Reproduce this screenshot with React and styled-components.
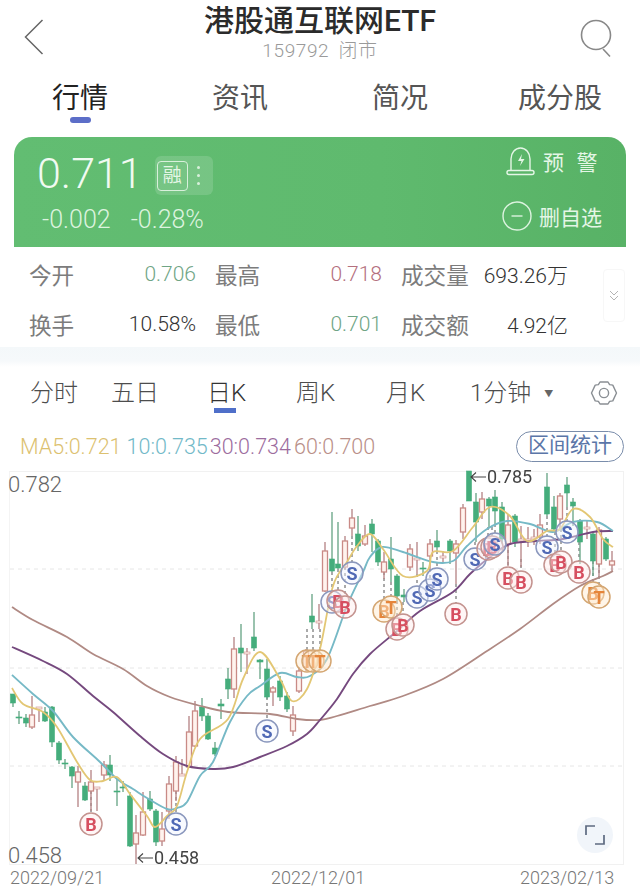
import React from 'react';
import styled, { createGlobalStyle } from 'styled-components';

const GlobalStyle = createGlobalStyle`
  html, body { margin: 0; padding: 0; background: #fff; }
  body {
    width: 640px;
    height: 889px;
    overflow: hidden;
    font-family: Roboto, "Noto Sans CJK SC", sans-serif;
  }
  * { box-sizing: border-box; }
`;

const Page = styled.div`
  width: 640px;
  height: 889px;
  display: flex;
  flex-direction: column;
  color: #333;
`;

/* header */
const Header = styled.header`
  height: 68px;
  display: grid;
  grid-template-columns: 80px 1fr 80px;
  align-items: center;
`;
const BackBtn = styled.div`
  padding: 6px 0 0 23px;
  display: flex;
`;
const SearchBtn = styled.div`
  padding: 10px 0 0 19px;
  display: flex;
`;
const TitleBox = styled.div`
  text-align: center;
  margin-top: -2px;
`;
const Title = styled.div`
  font-size: 30px;
  line-height: 36px;
  font-weight: 500;
  color: #2b2b2b;
  white-space: nowrap;
`;
const SubTitle = styled.div`
  font-size: 19px;
  line-height: 24px;
  margin-top: 0;
  font-weight: 300;
  letter-spacing: 0.6px;
  color: #9a9a9a;
  word-spacing: 4px;
`;

const Tabs = styled.nav`
  height: 69px;
  display: grid;
  grid-template-columns: 160px 160px 146px auto;
  padding-left: 52px;
`;
const Tab = styled.div`
  position: relative;
  font-size: 28px;
  line-height: 38px;
  padding-top: 12px;
  color: ${(p) => (p.$active ? '#222' : '#555')};
  &::after {
    content: '';
    display: ${(p) => (p.$active ? 'block' : 'none')};
    position: absolute;
    left: 18px;
    top: 49px;
    width: 21px;
    height: 6px;
    border-radius: 3px;
    background: #5c6ec8;
  }
`;

/* green quote card */
const QuoteCard = styled.section`
  margin: 0 14px;
  height: 111px;
  border-radius: 18px 18px 0 0;
  background: linear-gradient(90deg, #62bd72 0%, #5fba6e 60%, #58b266 100%);
  display: flex;
  justify-content: space-between;
  color: #e4f6e6;
`;
const QuoteLeft = styled.div`
  padding: 13px 0 0 23px;
`;
const PriceRow = styled.div`
  display: flex;
  align-items: center;
  gap: 12px;
`;
const Price = styled.div`
  font-size: 43px;
  line-height: 46px;
  font-weight: 300;
  color: #f1faf2;
`;
const MarginBadge = styled.div`
  width: 58px;
  height: 39px;
  border-radius: 6px;
  background: rgba(255, 255, 255, 0.14);
  display: flex;
  align-items: center;
  padding-left: 2px;
  gap: 9px;
  margin-top: 6px;
`;
const MarginMark = styled.div`
  width: 31px;
  height: 30px;
  border: 1.5px solid #d8f0db;
  border-radius: 4px;
  font-size: 19px;
  line-height: 27px;
  text-align: center;
`;
const Dots = styled.div`
  display: flex;
  flex-direction: column;
  gap: 5px;
  i {
    width: 3px;
    height: 3px;
    border-radius: 50%;
    background: #d8f0db;
  }
`;
const ChangeRow = styled.div`
  display: flex;
  gap: 20px;
  margin: 9px 0 0 5px;
  font-size: 25px;
  line-height: 30px;
  font-weight: 300;
  color: #dcf3df;
`;
const QuoteRight = styled.div`
  width: 124px;
  padding-top: 9px;
  display: flex;
  flex-direction: column;
  gap: 25px;
`;
const QuoteAction = styled.div`
  display: flex;
  align-items: center;
  height: 30px;
  font-size: 21px;
  white-space: pre;
  word-spacing: ${(p) => (p.$wide ? '1px' : '0')};
  gap: 7px;
  margin-left: ${(p) => (p.$wide ? '3px' : '0')};
`;

/* stats */
const Stats = styled.section`
  position: relative;
  height: 100px;
  padding: 2px 0 0 29px;
  display: grid;
  grid-template-columns: repeat(3, 167px);
  grid-auto-rows: 50px;
  column-gap: 19px;
  background: #fff;
`;
const Stat = styled.div`
  display: flex;
  justify-content: space-between;
  align-items: center;
  font-size: 22.6px;
`;
const StatLabel = styled.span`
  color: #7c7c7c;
`;
const StatValue = styled.span`
  font-size: 21px;
  font-weight: 300;
  color: ${(p) => p.$color || '#333'};
`;
const Expand = styled.div`
  position: absolute;
  left: 603px;
  top: 22px;
  width: 22px;
  height: 53px;
  border: 1px solid #f7f7f7;
  border-radius: 4px;
  display: flex;
  align-items: center;
  justify-content: center;
`;
const Band = styled.div`
  height: 20px;
  background: linear-gradient(180deg, #f4f8fa 0%, #f6f9fb 70%, #fff 100%);
`;

/* period tabs */
const Periods = styled.nav`
  position: relative;
  height: 52px;
  padding-left: 30px;
  display: grid;
  grid-template-columns: 81px 96px 89px 90px 84px 120px auto;
  align-items: center;
`;
const Period = styled.div`
  position: relative;
  font-size: 24px;
  font-weight: 300;
  line-height: 30px;
  color: ${(p) => (p.$active ? '#333' : '#4d4d4d')};
  white-space: nowrap;
  &::after {
    content: '';
    display: ${(p) => (p.$active ? 'block' : 'none')};
    position: absolute;
    left: 7px;
    top: 30px;
    width: 22px;
    height: 5px;
    background: #4f6fc9;
  }
`;
const Caret = styled.span`
  font-size: 9px;
  color: #666;
  margin-left: 13px;
  vertical-align: 4px;
`;
const Gear = styled.div`
  display: flex;
`;

/* MA row */
const MaRow = styled.div`
  height: 52px;
  padding: 3px 16px 0 20px;
  display: flex;
  align-items: center;
`;
const Ma = styled.span`
  font-size: 21.5px;
  font-weight: 300;
  color: ${(p) => p.$color};
  margin-right: ${(p) => p.$gap || 2}px;
`;
const RangeBtn = styled.div`
  margin-left: auto;
  width: 108px;
  height: 31px;
  border: 1.5px solid #7a8dab;
  border-radius: 16px;
  color: #5b76a8;
  font-size: 21px;
  line-height: 27px;
  text-align: center;
`;

/* chart */
const ChartFrame = styled.div`
  position: relative;
  margin-left: 9px;
  width: 615px;
  height: 395px;
  border: 1px solid #f1f1f1;
  border-left-color: #f4f4f4;
`;
const ChartSvg = styled.svg`
  position: absolute;
  left: -10px;
  top: -13px;
  display: block;
  filter: blur(0.35px);
`;
const AxisLabel = styled.div`
  position: absolute;
  left: -2px;
  ${(p) => (p.$bottom ? 'bottom: -5px;' : 'top: 0;')}
  font-size: 22px;
  font-weight: 300;
  line-height: 26px;
  color: #666;
`;
const FullscreenBtn = styled.div`
  position: absolute;
  left: 567px;
  top: 345px;
  width: 36px;
  height: 36px;
  border-radius: 50%;
  background: #f1f5fa;
  display: flex;
  align-items: center;
  justify-content: center;
`;
const Dates = styled.div`
  display: grid;
  grid-template-columns: 261px 249px auto;
  padding-left: 10px;
  font-size: 18px;
  font-weight: 300;
  line-height: 22px;
  margin-top: 2px;
  color: #777;
`;

// [x, wickTop, wickBottom, bodyTop, bodyBottom, colour]
const CANDLES = [
  [13, 695, 708, 695, 704, 'g'], [19, 712, 725, 718, 719, 'g'], [26, 715, 728, 719, 724, 'g'],
  [32, 697, 730, 716, 728, 'r'], [39, 708, 723, 708, 710, 'r'], [45, 708, 723, 713, 722, 'g'],
  [52, 707, 748, 708, 743, 'g'], [59, 742, 765, 744, 761, 'g'], [65, 760, 770, 764, 765, 'g'],
  [72, 767, 789, 768, 777, 'g'], [78, 767, 808, 773, 783, 'r'], [85, 783, 802, 787, 801, 'g'],
  [91, 771, 812, 783, 792, 'r'], [97, 788, 812, 788, 790, 'r'], [104, 762, 782, 766, 776, 'r'],
  [110, 756, 782, 766, 776, 'g'], [117, 780, 807, 792, 793, 'g'], [123, 782, 793, 788, 789, 'g'],
  [130, 793, 848, 797, 847, 'g'], [136, 816, 865, 834, 845, 'r'], [143, 793, 837, 813, 836, 'r'],
  [150, 792, 812, 800, 810, 'g'], [156, 810, 847, 812, 843, 'g'], [162, 813, 847, 830, 842, 'r'],
  [169, 777, 820, 785, 812, 'r'], [176, 757, 802, 763, 792, 'r'], [182, 760, 777, 775, 777, 'r'],
  [189, 717, 769, 733, 768, 'r'], [195, 702, 748, 712, 747, 'r'], [202, 699, 722, 708, 717, 'g'],
  [208, 714, 741, 717, 740, 'g'], [215, 743, 757, 749, 755, 'g'], [221, 700, 720, 705, 707, 'g'],
  [228, 669, 700, 680, 690, 'g'], [234, 638, 699, 650, 690, 'r'], [241, 625, 673, 649, 654, 'g'],
  [247, 649, 675, 653, 655, 'r'], [254, 613, 652, 638, 649, 'g'], [260, 660, 680, 661, 663, 'g'],
  [267, 660, 700, 670, 698, 'g'], [273, 687, 707, 689, 693, 'r'], [280, 677, 702, 682, 698, 'g'],
  [287, 693, 713, 697, 710, 'g'], [293, 707, 737, 716, 732, 'r'], [299, 668, 694, 672, 692, 'r'],
  [306, 650, 672, 652, 668, 'r'], [312, 595, 630, 617, 623, 'g'], [319, 605, 630, 622, 624, 'r'],
  [325, 543, 593, 552, 592, 'r'], [332, 513, 573, 560, 572, 'g'], [338, 523, 570, 565, 569, 'g'],
  [345, 537, 570, 542, 568, 'r'], [352, 510, 537, 519, 529, 'r'], [358, 517, 552, 535, 547, 'g'],
  [365, 526, 547, 537, 545, 'r'], [372, 520, 553, 525, 535, 'g'], [378, 540, 567, 542, 563, 'g'],
  [384, 553, 580, 563, 573, 'r'], [391, 538, 583, 560, 570, 'g'], [397, 575, 602, 577, 597, 'g'],
  [404, 590, 603, 596, 598, 'g'], [410, 545, 572, 550, 568, 'r'], [417, 543, 575, 559, 561, 'r'],
  [423, 563, 577, 569, 570, 'g'], [430, 540, 570, 545, 557, 'r'], [437, 531, 552, 542, 548, 'g'],
  [443, 552, 563, 557, 559, 'r'], [450, 540, 565, 542, 552, 'g'], [456, 541, 585, 545, 554, 'r'],
  [463, 505, 540, 509, 533, 'r'], [469, 472, 502, 472, 502, 'g'], [476, 494, 543, 503, 523, 'g'],
  [482, 493, 520, 500, 513, 'r'], [489, 498, 528, 500, 507, 'g'], [495, 491, 525, 498, 512, 'g'],
  [502, 503, 545, 508, 540, 'g'], [508, 515, 567, 526, 545, 'r'], [515, 515, 548, 517, 543, 'g'],
  [521, 527, 568, 540, 542, 'r'], [528, 528, 548, 540, 542, 'r'], [534, 530, 546, 538, 540, 'r'],
  [540, 515, 545, 526, 538, 'r'], [547, 474, 517, 488, 515, 'g'], [554, 497, 533, 508, 530, 'g'],
  [560, 494, 530, 497, 520, 'r'], [567, 478, 508, 486, 494, 'g'], [573, 499, 527, 503, 507, 'g'],
  [580, 520, 565, 522, 543, 'g'], [587, 522, 540, 528, 530, 'r'], [593, 533, 577, 535, 562, 'g'],
  [599, 528, 578, 531, 565, 'r'], [606, 538, 562, 540, 560, 'g'], [612, 552, 573, 562, 566, 'r'],
];

const MA60 = [[12, 608], [33, 621], [67, 638], [93, 655], [123, 670], [147, 687], [170, 698], [197, 706], [228, 713], [270, 715], [297, 720], [320, 721], [337, 717], [370, 707], [403, 697], [443, 680], [487, 652], [520, 630], [553, 605], [580, 587], [603, 577], [613, 572]];
const MA30 = [[12, 648], [43, 662], [67, 675], [93, 697], [113, 713], [140, 737], [163, 755], [187, 767], [213, 770], [233, 768], [260, 758], [287, 747], [307, 735], [320, 721], [337, 700], [353, 675], [370, 655], [397, 632], [420, 612], [453, 593], [470, 575], [490, 558], [510, 545], [537, 542], [563, 540], [593, 533], [613, 532]];
const MA10 = [[12, 676], [33, 695], [53, 712], [73, 738], [100, 763], [117, 780], [133, 790], [147, 799], [167, 810], [177, 809], [187, 803], [200, 777], [213, 763], [230, 723], [247, 697], [260, 687], [280, 674], [297, 678], [310, 677], [327, 660], [347, 607], [363, 573], [370, 558], [382, 548], [403, 553], [433, 563], [453, 562], [467, 547], [487, 530], [507, 522], [530, 525], [553, 533], [573, 523], [597, 523], [613, 532]];
const MA5 = [[12, 689], [23, 705], [43, 713], [57, 728], [77, 763], [90, 781], [103, 782], [117, 778], [130, 795], [147, 817], [155, 828], [167, 817], [177, 807], [187, 773], [200, 740], [228, 720], [243, 680], [260, 653], [280, 680], [292, 702], [307, 690], [320, 650], [333, 587], [347, 563], [357, 547], [370, 535], [383, 550], [403, 577], [427, 572], [433, 553], [453, 552], [473, 528], [490, 508], [510, 517], [527, 542], [547, 532], [560, 530], [573, 510], [590, 518], [603, 540], [613, 548]];

// [x, y, letter, kind, dashStartY]
const BADGES = [
  [91, 825, 'B', 'b', 792], [176, 825, 'S', 's', 792], [267, 732, 'S', 's', 698],
  [307, 662, 'T', 'o', 630], [313, 662, 'T', 'o', 630], [320, 662, 'T', 'o', 630],
  [332, 603, 'S', 's', 573], [338, 602, 'B', 'b', 570], [345, 608, 'B', 'b', 568], [352, 574, 'S', 's', 537],
  [384, 612, 'B', 'o', 573], [391, 608, 'T', 'o', 583], [397, 630, 'B', 'b', 602], [403, 626, 'B', 'b', 603],
  [417, 598, 'S', 's', 575], [430, 591, 'S', 's', 570], [437, 580, 'S', 's', 552],
  [456, 615, 'B', 'b', 585], [475, 560, 'S', 's', 543], [488, 550, 'B', 'b', 528], [492, 548, 'B', 'b', 528], [495, 545, 'S', 's', 525],
  [508, 579, 'B', 'b', 545], [521, 583, 'B', 'b', 560], [547, 548, 'S', 's', 517],
  [555, 566, 'B', 'b', 533], [561, 563, 'B', 'b', 530], [567, 533, 'S', 's', 508], [579, 573, 'B', 'b', 543],
  [593, 594, 'B', 'o', 562], [599, 598, 'T', 'o', 565],
];

const BADGE_COLORS = {
  b: { stroke: '#c4938f', fill: 'rgba(255,236,234,0.45)', text: '#d64f60' },
  s: { stroke: '#8a97bd', fill: 'rgba(240,244,255,0.45)', text: '#5069b5' },
  o: { stroke: '#d4a672', fill: 'rgba(255,232,205,0.45)', text: '#e5853a' },
};

// catmull-rom through the sampled points, keeps the averages round
const smooth = (pts) => {
  let d = `M${pts[0][0]} ${pts[0][1]}`;
  for (let i = 0; i < pts.length - 1; i++) {
    const p0 = pts[i - 1] || pts[i];
    const p1 = pts[i];
    const p2 = pts[i + 1];
    const p3 = pts[i + 2] || p2;
    const c1x = p1[0] + (p2[0] - p0[0]) / 6;
    const c1y = p1[1] + (p2[1] - p0[1]) / 6;
    const c2x = p2[0] - (p3[0] - p1[0]) / 6;
    const c2y = p2[1] - (p3[1] - p1[1]) / 6;
    d += ` C${c1x.toFixed(1)} ${c1y.toFixed(1)} ${c2x.toFixed(1)} ${c2y.toFixed(1)} ${p2[0]} ${p2[1]}`;
  }
  return d;
};

const Candle = ({ c }) => {
  const [x, top, bottom, bodyTop, bodyBottom, kind] = c;
  const red = kind === 'r';
  const thin = bodyBottom - bodyTop < 4;
  return (
    <g>
      <line x1={x} x2={x} y1={top} y2={bottom} stroke={red ? '#b98a8c' : '#6fa98c'} strokeWidth="1.4" />
      <rect
        x={x - (thin ? 3 : 2.5)}
        y={bodyTop}
        width={thin ? 6 : 5}
        height={bodyBottom - bodyTop}
        fill={red ? '#fff3ee' : '#45ad7c'}
        stroke={red ? '#c98a86' : '#45ad7c'}
        strokeWidth={red && !thin ? 1.3 : 0.6}
      />
    </g>
  );
};

const Badge = ({ b }) => {
  const [x, y, letter, kind] = b;
  const col = BADGE_COLORS[kind];
  return (
    <g>
      <circle cx={x} cy={y} r="11" fill={col.fill} stroke={col.stroke} strokeWidth="1.5" />
      <text
        x={x}
        y={y + 6.5}
        textAnchor="middle"
        fontFamily="Roboto, sans-serif"
        fontWeight="700"
        fontSize="18"
        fill={col.text}
      >
        {letter}
      </text>
    </g>
  );
};

const PriceNote = ({ x, y, children }) => (
  <g>
    <path d={`M${x + 16} ${y}H${x + 1}M${x + 6} ${y - 4.5}L${x + 1} ${y}L${x + 6} ${y + 4.5}`} fill="none" stroke="#444" strokeWidth="1.1" />
    <text x={x + 17} y={y + 6} fontFamily="Roboto, sans-serif" fontSize="18" fill="#444">
      {children}
    </text>
  </g>
);

const Chart = () => (
  <ChartSvg width="640" height="410" viewBox="0 460 640 410">
    {[570, 669, 767].map((y) => (
      <line key={y} x1="10" x2="622" y1={y} y2={y} stroke="#e6e6e6" strokeWidth="1" strokeDasharray="4 4" />
    ))}
    {BADGES.map((b, i) => (
      <line key={i} x1={b[0]} x2={b[0]} y1={b[4]} y2={b[1] - 10} stroke="#555" strokeWidth="1" strokeDasharray="3 3" />
    ))}
    {CANDLES.map((c) => (
      <Candle key={c[0]} c={c} />
    ))}
    <path d={smooth(MA60)} fill="none" stroke="#b08a84" strokeWidth="1.8" />
    <path d={smooth(MA30)} fill="none" stroke="#75497e" strokeWidth="1.9" />
    <path d={smooth(MA10)} fill="none" stroke="#76b9c6" strokeWidth="1.9" />
    <path d={smooth(MA5)} fill="none" stroke="#e3c774" strokeWidth="1.8" />
    {BADGES.map((b, i) => (
      <Badge key={i} b={b} />
    ))}
    <PriceNote x={470} y={478}>0.785</PriceNote>
    <PriceNote x={137} y={859}>0.458</PriceNote>
  </ChartSvg>
);

const BackIcon = () => (
  <svg width="22" height="38" viewBox="0 0 22 38" fill="none" stroke="#666" strokeWidth="1.5">
    <path d="M19.5 2L2.5 19l17 17" />
  </svg>
);

const SearchIcon = () => (
  <svg width="36" height="42" viewBox="0 0 36 42" fill="none" stroke="#888" strokeWidth="1.6">
    <circle cx="17" cy="17" r="14.5" />
    <path d="M24 31l7 7.5" />
  </svg>
);

const BellIcon = () => (
  <svg width="31" height="30" viewBox="0 0 31 30" fill="none" stroke="#e4f6e6" strokeWidth="1.4">
    <path d="M6 25V13C6 7 10 2 15.5 2S25 7 25 13v12" />
    <rect x="2" y="24.5" width="27" height="4" rx="2" />
    <path d="M17 8l-4 7h3.5l-1.5 5 4.5-7H16z" fill="#e4f6e6" stroke="none" />
  </svg>
);

const MinusIcon = () => (
  <svg width="30" height="30" viewBox="0 0 30 30" fill="none" stroke="#dcf3df" strokeWidth="1.4">
    <circle cx="15" cy="15" r="14" />
    <path d="M9.5 15h11" />
  </svg>
);

const GearIcon = () => (
  <svg width="28" height="28" viewBox="0 0 28 28" fill="none" stroke="#8a8f94" strokeWidth="1.4">
    <path d="M10 3h8l1.6 2.6 3.2.5L26.5 14l-3.7 7.9-3.2.5L18 25h-8l-1.6-2.6-3.2-.5L1.5 14l3.7-7.9 3.2-.5z" strokeLinejoin="round" />
    <circle cx="14" cy="14" r="4.6" />
  </svg>
);

const App = () => (
  <Page>
    <GlobalStyle />
    <Header>
      <BackBtn>
        <BackIcon />
      </BackBtn>
      <TitleBox>
        <Title>港股通互联网ETF</Title>
        <SubTitle>159792 闭市</SubTitle>
      </TitleBox>
      <SearchBtn>
        <SearchIcon />
      </SearchBtn>
    </Header>
    <Tabs>
      <Tab $active>行情</Tab>
      <Tab>资讯</Tab>
      <Tab>简况</Tab>
      <Tab>成分股</Tab>
    </Tabs>
    <QuoteCard>
      <QuoteLeft>
        <PriceRow>
          <Price>0.711</Price>
          <MarginBadge>
            <MarginMark>融</MarginMark>
            <Dots>
              <i />
              <i />
              <i />
            </Dots>
          </MarginBadge>
        </PriceRow>
        <ChangeRow>
          <span>-0.002</span>
          <span>-0.28%</span>
        </ChangeRow>
      </QuoteLeft>
      <QuoteRight>
        <QuoteAction $wide>
          <BellIcon />
          预  警
        </QuoteAction>
        <QuoteAction>
          <MinusIcon />
          删自选
        </QuoteAction>
      </QuoteRight>
    </QuoteCard>
    <Stats>
      <Stat>
        <StatLabel>今开</StatLabel>
        <StatValue $color="#6fa585">0.706</StatValue>
      </Stat>
      <Stat>
        <StatLabel>最高</StatLabel>
        <StatValue $color="#b4707e">0.718</StatValue>
      </Stat>
      <Stat>
        <StatLabel>成交量</StatLabel>
        <StatValue>693.26万</StatValue>
      </Stat>
      <Stat>
        <StatLabel>换手</StatLabel>
        <StatValue>10.58%</StatValue>
      </Stat>
      <Stat>
        <StatLabel>最低</StatLabel>
        <StatValue $color="#6fa585">0.701</StatValue>
      </Stat>
      <Stat>
        <StatLabel>成交额</StatLabel>
        <StatValue>4.92亿</StatValue>
      </Stat>
      <Expand>
        <svg width="12" height="14" viewBox="0 0 12 14" fill="none" stroke="#b4b4b4" strokeWidth="1">
          <path d="M2 2l4 4 4-4M2 7l4 4 4-4" />
        </svg>
      </Expand>
    </Stats>
    <Band />
    <Periods>
      <Period>分时</Period>
      <Period>五日</Period>
      <Period $active>日K</Period>
      <Period>周K</Period>
      <Period>月K</Period>
      <Period>
        1分钟<Caret>▼</Caret>
      </Period>
      <Gear>
        <GearIcon />
      </Gear>
    </Periods>
    <MaRow>
      <Ma $color="#dcc170" $gap={5}>MA5:0.721</Ma>
      <Ma $color="#72b9c8">10:0.735</Ma>
      <Ma $color="#9c6c9e" $gap={3}>30:0.734</Ma>
      <Ma $color="#b98f88">60:0.700</Ma>
      <RangeBtn>区间统计</RangeBtn>
    </MaRow>
    <ChartFrame>
      <Chart />
      <AxisLabel>0.782</AxisLabel>
      <AxisLabel $bottom>0.458</AxisLabel>
      <FullscreenBtn>
        <svg width="20" height="20" viewBox="0 0 20 20" fill="none" stroke="#5d6a80" strokeWidth="1.7">
          <path d="M1 10V1h9M19 10v9h-9" />
        </svg>
      </FullscreenBtn>
    </ChartFrame>
    <Dates>
      <span>2022/09/21</span>
      <span>2022/12/01</span>
      <span>2023/02/13</span>
    </Dates>
  </Page>
);

export default App;
